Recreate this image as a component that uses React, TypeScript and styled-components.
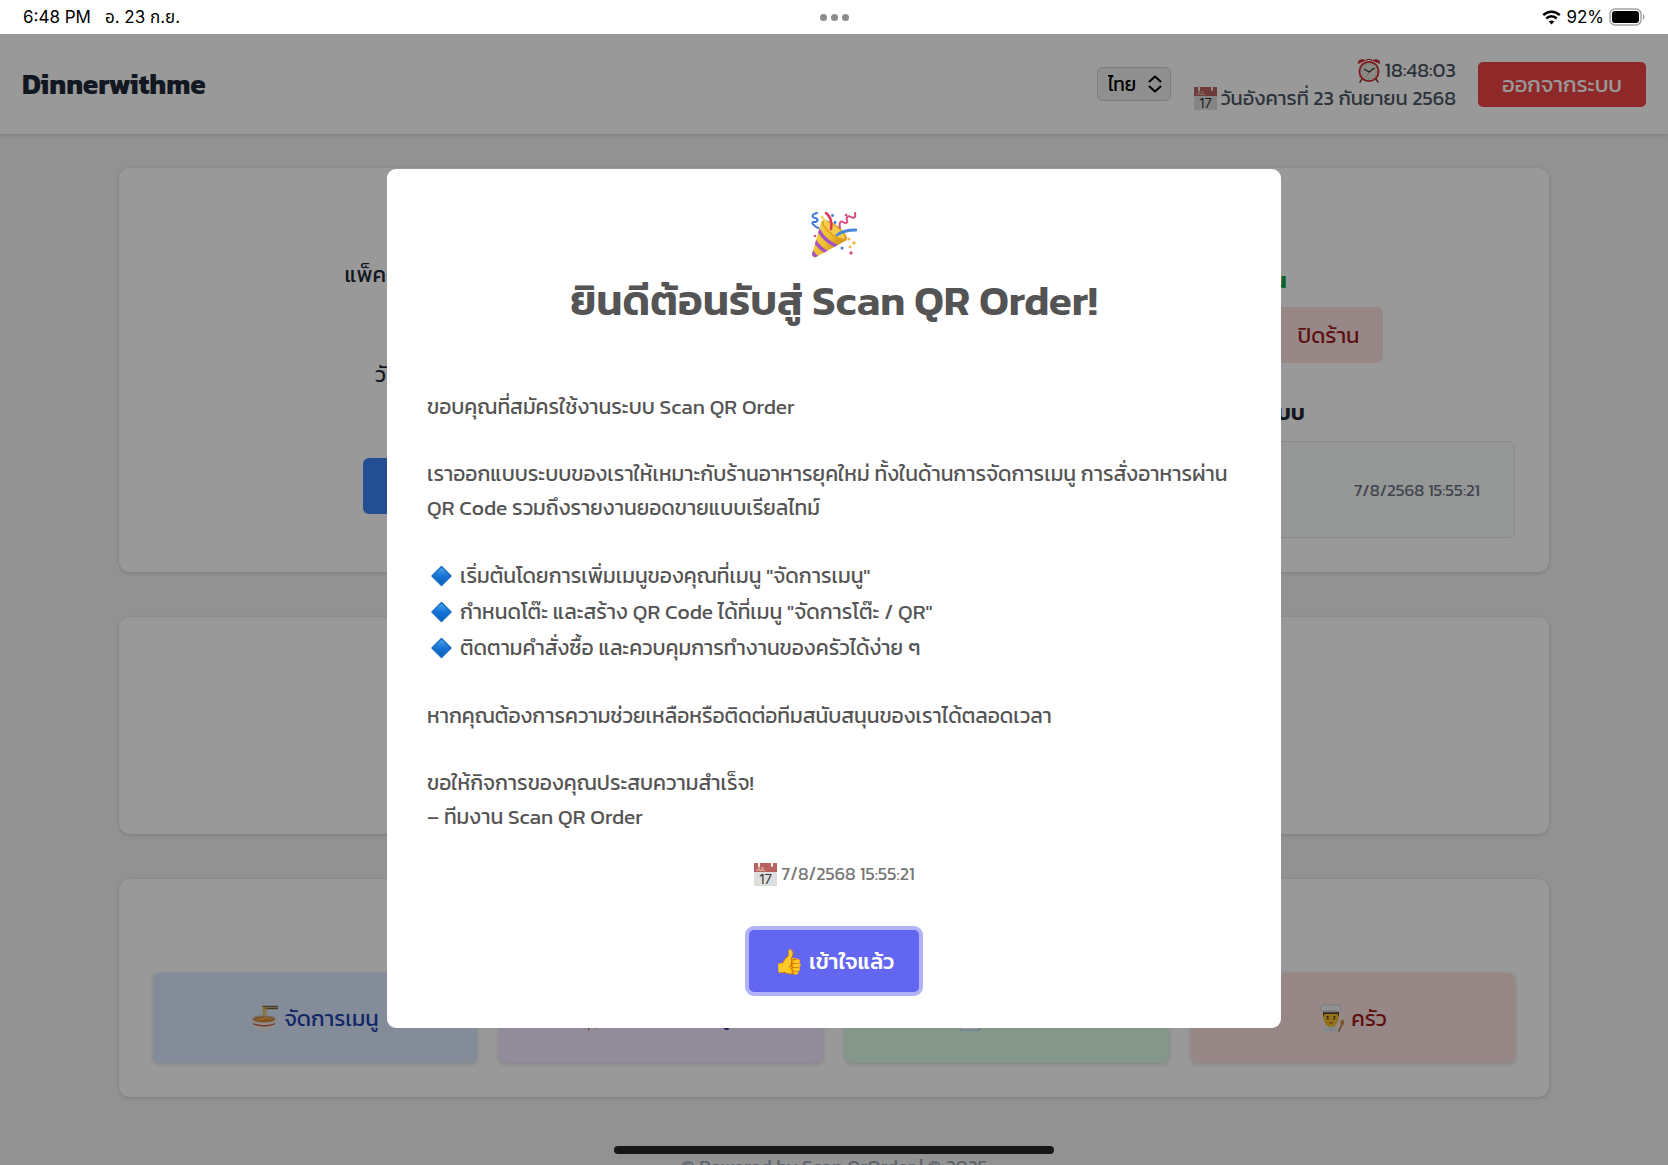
import React from "react";
import styled, { createGlobalStyle } from "styled-components";

const GlobalStyle = createGlobalStyle`
  *, *::before, *::after { box-sizing: border-box; }
  html, body, #root { height: 100%; }
  body { margin: 0; overflow: hidden; background: #f3f4f6; color: #1f2937; }
  body, button, select { font-family: Kanit, "Noto Sans Thai", "Noto Sans", sans-serif; }
  h1, h2, p, ul { margin: 0; padding: 0; }
`;

/* ---------- device frame ---------- */

const Screen = styled.div`
  display: flex;
  flex-direction: column;
  height: 100vh;
  position: relative;
  overflow: hidden;
`;

const StatusBar = styled.div`
  flex: none;
  display: grid;
  grid-template-columns: 1fr auto 1fr;
  align-items: center;
  height: 34px;
  padding: 0 23px;
  background: #fff;
  color: #000;
  font-family: Inter, "Noto Sans Thai", "Noto Sans", sans-serif;
  font-size: 17px;
  line-height: 20px;
`;

const StatusGroup = styled.div<{ $end?: boolean }>`
  display: flex;
  align-items: center;
  gap: ${(p) => (p.$end ? "5px" : "14px")};
  justify-content: ${(p) => (p.$end ? "flex-end" : "flex-start")};
`;

const Dots = styled.div`
  display: flex;
  gap: 4px;
  span { width: 7px; height: 7px; border-radius: 50%; background: #8c8c8c; }
`;

const Viewport = styled.div`
  flex: 1;
  min-height: 0;
  position: relative;
  overflow: hidden;
`;

const HomeIndicator = styled.div`
  position: absolute;
  left: 50%;
  bottom: 11px;
  width: 440px;
  height: 8px;
  margin-left: -220px;
  border-radius: 4px;
  background: #171717;
`;

/* ---------- page ---------- */

const Header = styled.header`
  display: flex;
  align-items: center;
  justify-content: space-between;
  height: 100px;
  padding: 0 22px;
  background: #fff;
  box-shadow: 0 1px 4px rgba(0, 0, 0, 0.16);
`;

const Brand = styled.h1`
  font-size: 28px;
  line-height: 36px;
  font-weight: 700;
`;

const HeaderTools = styled.div`
  display: flex;
  align-items: center;
  gap: 22px;
`;

const LanguageBox = styled.label`
  display: grid;
  align-items: center;
  svg { grid-area: 1 / 1; justify-self: end; margin-right: 9px; pointer-events: none; }
`;

const LanguageSelect = styled.select`
  grid-area: 1 / 1;
  appearance: none;
  width: 74px;
  height: 34px;
  padding: 0 10px;
  border: 1px solid #d1d5db;
  border-radius: 5px;
  background: #efefef;
  color: #000;
  font-size: 19px;
`;

const Clock = styled.div`
  display: flex;
  flex-direction: column;
  align-items: flex-end;
  font-size: 20px;
  line-height: 28px;
  color: #4b5563;
`;

const IconText = styled.span`
  display: inline-flex;
  align-items: center;
  gap: 4px;
`;

const LogoutButton = styled.button`
  height: 45px;
  padding: 0 24px;
  border: 0;
  border-radius: 5px;
  background: #ef4444;
  color: #fff;
  font-size: 22px;
`;

const Main = styled.main`
  display: flex;
  flex-direction: column;
  gap: 45px;
  max-width: 1430px;
  margin: 34px auto 0;
`;

const Card = styled.section<{ $height?: number }>`
  min-height: ${(p) => p.$height || 0}px;
  padding: 34px;
  border-radius: 11px;
  background: #fff;
  box-shadow: 0 1px 4px rgba(0, 0, 0, 0.16);
`;

const Overview = styled(Card)`
  display: grid;
  grid-template-columns: 1fr 1fr;
  gap: 34px;
`;

const Column = styled.div`
  display: flex;
  flex-direction: column;
  align-items: center;
`;

const PlanColumn = styled(Column)`
  justify-content: flex-end;
  padding-bottom: 24px;
  gap: 66px;
`;

const PlanLine = styled.p<{ $width: number }>`
  width: ${(p) => p.$width}px;
  font-size: 22px;
  line-height: 34px;
  white-space: nowrap;
`;

const PlanButton = styled.button`
  width: 244px;
  height: 56px;
  border: 0;
  border-radius: 6px;
  background: #3b82f6;
  color: #fff;
  font-size: 22px;
`;

const SectionTitle = styled.h2`
  font-size: 22px;
  line-height: 34px;
  font-weight: 600;
`;

const StoreState = styled.p`
  margin-top: 28px;
  font-size: 22px;
  line-height: 34px;
  font-weight: 700;
  color: #16a34a;
`;

const StateButtons = styled.div`
  display: flex;
  gap: 22px;
  margin: 9px 0 33px;
`;

const StateButton = styled.button<{ $bg: string; $fg: string; $wide?: boolean }>`
  min-width: ${(p) => (p.$wide ? "269px" : "auto")};
  height: 56px;
  padding: 0 24px;
  border: 0;
  border-radius: 6px;
  background: ${(p) => p.$bg};
  color: ${(p) => p.$fg};
  font-size: 22px;
`;

const Notice = styled.div`
  align-self: stretch;
  display: flex;
  align-items: center;
  justify-content: space-between;
  height: 97px;
  margin-top: 11px;
  padding: 0 34px;
  border: 1px solid #e5e7eb;
  border-radius: 6px;
  background: #f9fafb;
  font-size: 20px;
  time { font-size: 17px; color: #6b7280; }
`;

const MenuCard = styled(Card)`
  display: flex;
  flex-direction: column;
  justify-content: flex-end;
`;

const MenuGrid = styled.nav`
  display: grid;
  grid-template-columns: repeat(4, 1fr);
  gap: 22px;
`;

const MenuLink = styled.a<{ $bg: string; $fg: string }>`
  display: flex;
  align-items: center;
  justify-content: center;
  gap: 6px;
  height: 90px;
  border-radius: 6px;
  background: ${(p) => p.$bg};
  color: ${(p) => p.$fg};
  box-shadow: 0 1px 4px rgba(0, 0, 0, 0.16);
  font-size: 22px;
  text-decoration: none;
`;

const Footer = styled.footer`
  padding-top: 55px;
  text-align: center;
  font-size: 19px;
  line-height: 30px;
  color: #9ca3af;
`;

/* ---------- dialog ---------- */

const Backdrop = styled.div`
  position: absolute;
  inset: 0;
  display: flex;
  align-items: center;
  justify-content: center;
  padding-bottom: 2px;
  background: rgba(0, 0, 0, 0.4);
`;

const Dialog = styled.div`
  display: flex;
  flex-direction: column;
  align-items: center;
  width: 894px;
  max-width: 90%;
  padding: 38px 40px 36px;
  border-radius: 9px;
  background: #fff;
  color: #545454;
`;

const Party = styled.div`
  display: flex;
  align-items: center;
  height: 56px;
  margin-bottom: 5px;
`;

const DialogTitle = styled.h2`
  font-size: 42px;
  line-height: 66px;
  font-weight: 600;
`;

const Message = styled.div`
  align-self: stretch;
  display: flex;
  flex-direction: column;
  gap: 33px;
  margin-top: 56px;
  font-size: 21px;
  line-height: 34px;
`;

const Tips = styled.ul`
  list-style: none;
  li { display: flex; align-items: center; gap: 8px; height: 36px; padding-left: 4px; }
`;

const Stamp = styled(IconText)`
  margin-top: 27px;
  font-size: 18px;
  line-height: 26px;
  color: #777;
`;

const ConfirmButton = styled.button`
  display: flex;
  align-items: center;
  gap: 5px;
  height: 62px;
  margin-top: 43px;
  padding: 0 25px;
  border: 0;
  border-radius: 5px;
  background: #6366f1;
  box-shadow: 0 0 0 4px #b1b2f8;
  color: #fff;
  font-size: 22px;
  font-weight: 500;
`;

const Thumb = styled.span`
  font-size: 24px;
`;

/* ---------- drawings ---------- */

const Wifi = () => (
  <svg width="19" height="15" viewBox="0 0 19 15" fill="none" stroke="#000">
    <path d="M1.2 5.2C6 .6 13 .6 17.800 5.200" strokeWidth="2.500" />
    <path d="M4.300 8.500c3-2.900 7.400-2.900 10.400 0" strokeWidth="2.500" />
    <path d="M9.500 14.500 6.700 11.600c1.600-1.500 4-1.500 5.600 0z" fill="#000" stroke="none" />
  </svg>
);

const Battery = () => (
  <svg width="36" height="18" viewBox="0 0 36 18">
    <rect x="1" y="1" width="31" height="16" rx="5" fill="none" stroke="#a3a3a3" strokeWidth="1.500" />
    <rect x="3" y="3" width="27" height="12" rx="3" fill="#000" />
    <path d="M34 6c2 1 2 5 0 6z" fill="#a3a3a3" />
  </svg>
);

const Chevrons = () => (
  <svg width="14" height="18" viewBox="0 0 14 18" fill="none" stroke="#000" strokeWidth="2" strokeLinecap="round" strokeLinejoin="round">
    <path d="M1.500 6.500 7 1.500l5.500 5M1.500 11.500l5.500 5 5.500-5" />
  </svg>
);

const PartyPopper = () => (
  <svg width="46" height="46" viewBox="0 0 46 46" fill="none" strokeLinecap="round">
    <defs>
      <linearGradient id="cone" x1="0" y1="0" x2="1" y2=".6">
        <stop offset="0" stopColor="#f7d65a" />
        <stop offset=".55" stopColor="#efc02f" />
        <stop offset="1" stopColor="#c98512" />
      </linearGradient>
      <clipPath id="coneShape">
        <path d="M10.500 9 1 42c-.5 3 1.500 4 4 3l31-17z" />
      </clipPath>
    </defs>
    <path d="M10.500 9 1 42c-.5 3 1.500 4 4 3l31-17z" fill="url(#cone)" />
    <g clipPath="url(#coneShape)" stroke="#a653c4" strokeWidth="3.500">
      <path d="M7 17c4 8 11 14 20 18" />
      <path d="M3 28c4 6 8 10 14 13" />
      <path d="M0 38c2 4 4 6 7 8" />
    </g>
    <ellipse cx="23.500" cy="18.500" rx="15.500" ry="5.500" transform="rotate(38 23.500 18.500)" fill="#e0a021" />
    <ellipse cx="23" cy="18" rx="13" ry="3.800" transform="rotate(38 23 18)" fill="#f4cd4a" />
    <path d="M20 17c1-6 0-12-5-16" stroke="#e0355c" strokeWidth="2.500" />
    <path d="M26 23c5-4 11-5 19-5" stroke="#4b86dc" strokeWidth="2.800" />
    <path d="M6 1C1 2 0 5 4 6s3 4-1 4 0 4 4 6" stroke="#3d78d8" strokeWidth="2" />
    <path d="M44 1c1 4-1 6-4 4s-5 0-4 3-1 4-4 2-4 2-3 6" stroke="#dc4f86" strokeWidth="2" />
    <path d="M11 5l4 5" stroke="#f2d660" strokeWidth="2.500" />
    <g fill="#3d78d8"><circle cx="21.500" cy="3.500" r="1.400" /><circle cx="24" cy="10.500" r="1.400" /><circle cx="31" cy="36" r="1.500" /></g>
    <g fill="#dc4f86"><circle cx="35" cy="3" r="1.300" /><circle cx="4" cy="24" r="1.300" /><circle cx="40" cy="41" r="1.700" /></g>
    <g fill="#f0b24a"><circle cx="38" cy="27" r="1.500" /><circle cx="43" cy="31" r="1.700" /><circle cx="39" cy="35" r="1.400" /></g>
  </svg>
);

const Alarm = () => (
  <svg width="24" height="25" viewBox="0 0 24 25">
    <path d="M5 21l-2 3M19 21l2 3" stroke="#8a3a36" strokeWidth="1.500" strokeLinecap="round" />
    <path d="M1 6C0 2 5-.5 9 2.500zM23 6c1-4-4-6.500-8-3.500z" fill="#d42a32" />
    <path d="M9.500 3V1.500h5V3" fill="none" stroke="#a83a3a" />
    <circle cx="12" cy="13.500" r="10.500" fill="#c92b33" />
    <circle cx="12" cy="13.500" r="8.700" fill="#e9e6dc" />
    <circle cx="12" cy="13.500" r="7.300" fill="none" stroke="#8b8b86" strokeDasharray=".8 3.020" />
    <path d="M7 11l5 3 5.500-4" fill="none" stroke="#333" strokeWidth="1.200" />
    <path d="M12 14l-2 4" stroke="#c66" strokeWidth=".6" />
  </svg>
);

const Calendar = () => (
  <svg width="24" height="25" viewBox="0 0 24 25">
    <rect x="1" y="1" width="23" height="23" fill="#dedede" />
    <rect x="1" y="1" width="23" height="9" fill="#b9615f" />
    <path d="M6 0v4M19 0v4" stroke="#f4eeee" strokeWidth="2" strokeLinecap="round" />
    <text x="3" y="9" fontSize="5" fontFamily="Inter, sans-serif" fill="#eed">JUL</text>
    <text x="12.500" y="21.500" fontSize="13" fontFamily="Inter, sans-serif" textAnchor="middle" fill="#333">17</text>
  </svg>
);

const Diamond = () => (
  <svg width="21" height="24" viewBox="0 0 21 24">
    <defs>
      <linearGradient id="gem" x1="0" y1="0" x2="0" y2="1">
        <stop offset="0" stopColor="#4fa8ee" />
        <stop offset=".5" stopColor="#1674d6" />
        <stop offset="1" stopColor="#0a5cc0" />
      </linearGradient>
    </defs>
    <path d="M10.500 2.500 20 12l-9.500 9.500L1 12z" fill="url(#gem)" stroke="#1b6fc6" strokeWidth="1.500" strokeLinejoin="round" />
  </svg>
);

const Noodles = () => (
  <svg width="27" height="28" viewBox="0 0 27 28">
    <path d="M11.500 2.500H27M12 4.500h15" stroke="#7d6232" strokeWidth="1.400" />
    <path d="M12.500 3v12M14.500 3v12" stroke="#e6bb4c" strokeWidth="1.600" />
    <path d="M1 15c0 5 3 9 7 11 2 1.500 8 1.500 10 0 4-2 7-6 7-11z" fill="#efe9e4" />
    <ellipse cx="13" cy="15" rx="12" ry="3.800" fill="#c9c1b8" />
    <ellipse cx="13" cy="15.300" rx="10.800" ry="2.800" fill="#d9822f" />
    <path d="M6 15.500c3-2 5 1 7-1s5 1 7 0" fill="none" stroke="#f2c55a" strokeWidth="1.300" />
    <path d="M2 19.500c5 3 17 3 22 0" fill="none" stroke="#c4553f" strokeWidth="1.300" />
  </svg>
);

const Chef = () => (
  <svg width="26" height="28" viewBox="0 0 26 28">
    <path d="M3 28c0-4 4-6 9-6s9 2 9 6z" fill="#dfe7ec" />
    <path d="M9 22l3 4 3-4" fill="#f3f6f8" stroke="#aab7bf" strokeWidth=".7" />
    <path d="M4 9c0 9 3 14 8 14s8-5 8-14z" fill="#f5bd2e" />
    <path d="M4 8h16v5l-1.500-3h-13L4 13z" fill="#5a3f28" />
    <path d="M4 8C1 6 0 2 3 2c2-2 5-2 6-.5 2-1.500 5-1.500 6 0 2-1.500 6-1 7 1s-1 4-2 5.500z" fill="#eef1f3" stroke="#b4bcc2" strokeWidth=".7" />
    <path d="M4.500 7.500c5-1 10-1 15 0" fill="none" stroke="#b4bcc2" />
    <path d="M7.500 12.500h2M14.500 12.500h2" stroke="#4a3420" strokeWidth="1" />
    <circle cx="8.700" cy="14.500" r="1" fill="#3b2a1b" />
    <circle cx="15.300" cy="14.500" r="1" fill="#3b2a1b" />
    <path d="M9.500 18.500c1.500 1.500 3.500 1.500 5 0z" fill="#b23b2d" />
    <path d="M20 27l3-7" stroke="#b5793a" strokeWidth="1.600" strokeLinecap="round" />
    <ellipse cx="23.300" cy="18.500" rx="2" ry="2.700" fill="#c98a48" />
  </svg>
);

const tips = [
  'เริ่มต้นโดยการเพิ่มเมนูของคุณที่เมนู "จัดการเมนู"',
  'กำหนดโต๊ะ และสร้าง QR Code ได้ที่เมนู "จัดการโต๊ะ / QR"',
  "ติดตามคำสั่งซื้อ และควบคุมการทำงานของครัวได้ง่าย ๆ",
];

export default function App() {
  return (
    <Screen>
      <GlobalStyle />
      <StatusBar>
        <StatusGroup><span>6:48 PM</span><span>อ. 23 ก.ย.</span></StatusGroup>
        <Dots><span /><span /><span /></Dots>
        <StatusGroup $end><Wifi /><span>92%</span><Battery /></StatusGroup>
      </StatusBar>

      <Viewport>
        <Header>
          <Brand>Dinnerwithme</Brand>
          <HeaderTools>
            <LanguageBox>
              <LanguageSelect aria-label="ภาษา" defaultValue="th">
                <option value="th">ไทย</option>
              </LanguageSelect>
              <Chevrons />
            </LanguageBox>
            <Clock>
              <IconText><Alarm />18:48:03</IconText>
              <IconText><Calendar />วันอังคารที่ 23 กันยายน 2568</IconText>
            </Clock>
            <LogoutButton>ออกจากระบบ</LogoutButton>
          </HeaderTools>
        </Header>

        <Main>
          <Overview>
            <PlanColumn>
              <PlanLine $width={281}>แพ็คเกจปัจจุบัน</PlanLine>
              <PlanLine $width={220}>วันหมดอายุ</PlanLine>
              <PlanButton>ต่ออายุแพ็คเกจ</PlanButton>
            </PlanColumn>
            <Column>
              <SectionTitle>ร้านอาหาร</SectionTitle>
              <StoreState>สถานะร้าน – เปิดใช้งาน</StoreState>
              <StateButtons>
                <StateButton $wide $bg="#dcfce7" $fg="#166534">เปิดร้าน</StateButton>
                <StateButton $bg="#fee2e2" $fg="#991b1b">ปิดร้าน</StateButton>
              </StateButtons>
              <SectionTitle>ข้อความแจ้งเตือนจากระบบ</SectionTitle>
              <Notice><span>ยินดีต้อนรับ</span><time>7/8/2568 15:55:21</time></Notice>
            </Column>
          </Overview>
          <Card $height={217} />
          <MenuCard $height={218}>
            <MenuGrid>
              <MenuLink href="#menu" $bg="#dbeafe" $fg="#1e40af"><Noodles />จัดการเมนู</MenuLink>
              <MenuLink href="#tables" $bg="#f3e8ff" $fg="#3730a3">🪑 จัดการโต๊ะ / QR</MenuLink>
              <MenuLink href="#orders" $bg="#dcfce7" $fg="#166534">📄 ออเดอร์</MenuLink>
              <MenuLink href="#kitchen" $bg="#fee2e2" $fg="#991b1b"><Chef />ครัว</MenuLink>
            </MenuGrid>
          </MenuCard>
        </Main>
        <Footer>© Powered by Scan QrOrder | © 2025</Footer>

        <Backdrop>
          <Dialog role="dialog" aria-modal="true" aria-labelledby="welcome">
            <Party><PartyPopper /></Party>
            <DialogTitle id="welcome">ยินดีต้อนรับสู่ Scan QR Order!</DialogTitle>
            <Message>
              <p>ขอบคุณที่สมัครใช้งานระบบ Scan QR Order</p>
              <p>เราออกแบบระบบของเราให้เหมาะกับร้านอาหารยุคใหม่ ทั้งในด้านการจัดการเมนู การสั่งอาหารผ่าน QR Code รวมถึงรายงานยอดขายแบบเรียลไทม์</p>
              <Tips>{tips.map((tip) => <li key={tip}><Diamond />{tip}</li>)}</Tips>
              <p>หากคุณต้องการความช่วยเหลือหรือติดต่อทีมสนับสนุนของเราได้ตลอดเวลา</p>
              <p>ขอให้กิจการของคุณประสบความสำเร็จ!<br />– ทีมงาน Scan QR Order</p>
            </Message>
            <Stamp><Calendar />7/8/2568 15:55:21</Stamp>
            <ConfirmButton><Thumb>👍</Thumb><span>เข้าใจแล้ว</span></ConfirmButton>
          </Dialog>
        </Backdrop>
      </Viewport>
      <HomeIndicator />
    </Screen>
  );
}
